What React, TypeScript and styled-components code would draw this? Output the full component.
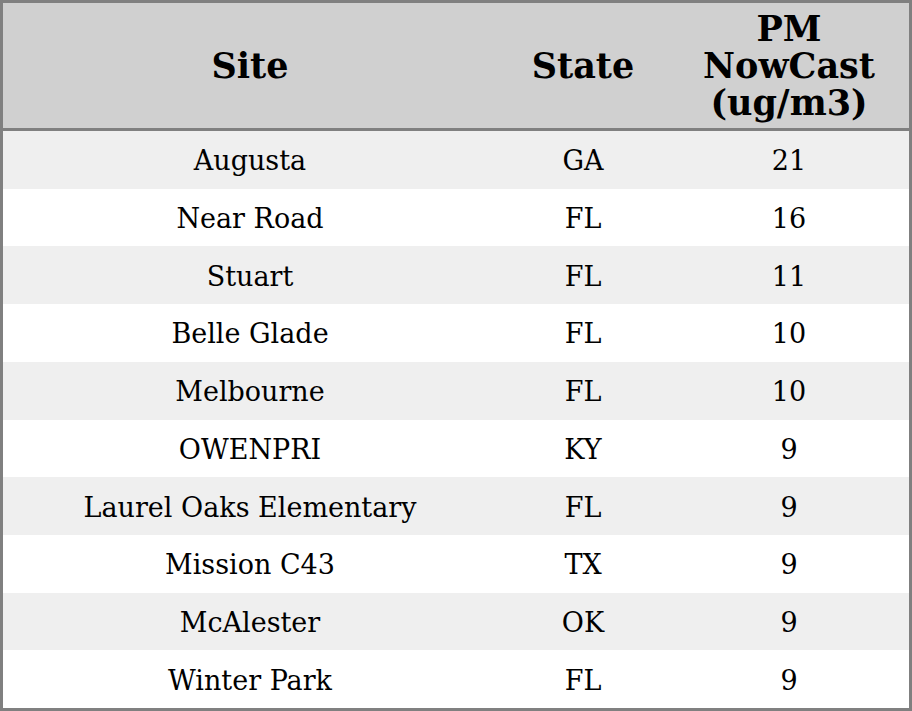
import React from "react";
import styled, { createGlobalStyle } from "styled-components";

const GlobalStyle = createGlobalStyle`
    html, body {
        margin: 0;
        padding: 0;
        background: #fff;
    }
    * {
        box-sizing: border-box;
    }
`;

const filas = [
    { site: "Augusta", state: "GA", pm: 21 },
    { site: "Near Road", state: "FL", pm: 16 },
    { site: "Stuart", state: "FL", pm: 11 },
    { site: "Belle Glade", state: "FL", pm: 10 },
    { site: "Melbourne", state: "FL", pm: 10 },
    { site: "OWENPRI", state: "KY", pm: 9 },
    { site: "Laurel Oaks Elementary", state: "FL", pm: 9 },
    { site: "Mission C43", state: "TX", pm: 9 },
    { site: "McAlester", state: "OK", pm: 9 },
    { site: "Winter Park", state: "FL", pm: 9 },
];

const App = () => {
    return (
        <>
            <GlobalStyle />
            <Tabla>
                <Encabezado>
                    <Titulo>Site</Titulo>
                    <Titulo>State</Titulo>
                    <Titulo>PM<br />NowCast<br />(ug/m3)</Titulo>
                </Encabezado>
                {filas.map((f, i) => (
                    <Fila key={f.site} $par={i % 2 === 1}>
                        <Celda>{f.site}</Celda>
                        <Celda>{f.state}</Celda>
                        <Celda>{f.pm}</Celda>
                    </Fila>
                ))}
            </Tabla>
        </>
    );
};

export default App;

const Tabla = styled.div`
    width: 912px;
    height: 711px;
    border: 3px solid #808080;
    display: grid;
    grid-template-rows: 128px repeat(10, 1fr);
    font-family: "DejaVu Serif", serif;
    color: #000;
`;

const Encabezado = styled.div`
    display: grid;
    grid-template-columns: 494px 172px 1fr;
    background: #d0d0d0;
    border-bottom: 3px solid #808080;
`;

const Titulo = styled.div`
    display: flex;
    align-items: center;
    justify-content: center;
    text-align: center;
    font-weight: bold;
    font-size: 35px;
    line-height: 37px;
`;

const Fila = styled.div<{ $par: boolean }>`
    display: grid;
    grid-template-columns: 494px 172px 1fr;
    background: ${(p) => (p.$par ? "#ffffff" : "#efefef")};
`;

const Celda = styled.div`
    display: flex;
    align-items: center;
    justify-content: center;
    padding-top: 2px;
    font-size: 27px;
`;
